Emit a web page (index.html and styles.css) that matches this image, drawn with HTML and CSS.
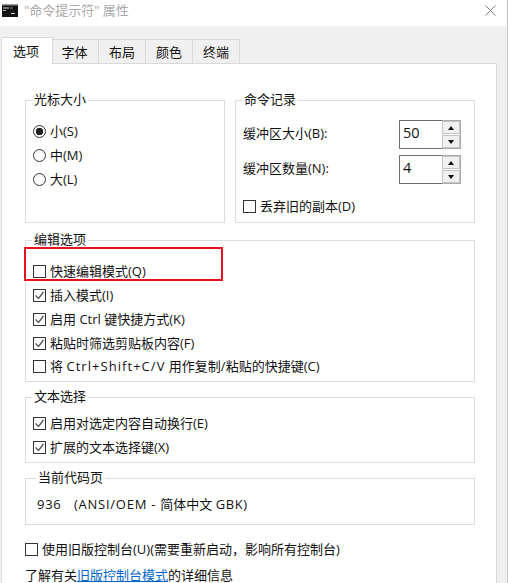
FILE: index.html
```html
<!DOCTYPE html>
<html lang="zh-CN">
<head>
<meta charset="utf-8">
<title>"命令提示符" 属性</title>
<link rel="stylesheet" href="styles.css">
</head>
<body>
<div class="window">
  <header class="titlebar">
    <svg class="app-icon" width="16" height="13" viewBox="0 0 16 13"><rect width="16" height="13" fill="#111"/><rect y="0" width="16" height="1.500" fill="#999"/><rect x="1" y="3.500" width="6" height="1" fill="#ddd"/><rect x="8" y="3.500" width="3" height="1" fill="#888"/><rect x="1" y="6" width="3" height="1" fill="#bbb"/><rect x="9" y="9" width="4" height="1" fill="#ccc"/></svg>
    <span class="title">"命令提示符" 属性</span>
    <svg class="close" width="11" height="11" viewBox="0 0 11 11"><path d="M.5.5l10 10M10.500.5l-10 10" stroke="#808080" fill="none"/></svg>
  </header>
  <nav class="tabs">
    <span class="tab active">选项</span>
    <span class="tab w46">字体</span>
    <span class="tab">布局</span>
    <span class="tab">颜色</span>
    <span class="tab">终端</span>
  </nav>
  <main class="panel">
    <div class="top-grid">
      <fieldset class="group cursor">
        <legend>光标大小</legend>
        <div class="row"><span class="radio on"></span>小(S)</div>
        <div class="row"><span class="radio"></span>中(M)</div>
        <div class="row"><span class="radio"></span>大(L)</div>
      </fieldset>
      <fieldset class="group history">
        <legend>命令记录</legend>
        <div class="spin-row">
          <span class="spin-label">缓冲区大小(B):</span>
          <div class="spin"><span class="spin-value">50</span><span class="spin-btns"><span class="btn up"></span><span class="btn down"></span></span></div>
        </div>
        <div class="spin-row second">
          <span class="spin-label">缓冲区数量(N):</span>
          <div class="spin"><span class="spin-value">4</span><span class="spin-btns"><span class="btn up"></span><span class="btn down"></span></span></div>
        </div>
        <div class="row discard"><span class="box"></span>丢弃旧的副本(D)</div>
      </fieldset>
    </div>
    <fieldset class="group edit">
      <legend>编辑选项</legend>
      <div class="highlight"></div>
      <div class="row"><span class="box"></span>快速编辑模式(Q)</div>
      <div class="row"><span class="box"><svg viewBox="0 0 11 11"><path d="M1.500 5.500l3 3 5-6.500" fill="none" stroke="#555" stroke-width="1.300"/></svg></span>插入模式(I)</div>
      <div class="row"><span class="box"><svg viewBox="0 0 11 11"><path d="M1.500 5.500l3 3 5-6.500" fill="none" stroke="#555" stroke-width="1.300"/></svg></span>启用 Ctrl 键快捷方式(K)</div>
      <div class="row"><span class="box"><svg viewBox="0 0 11 11"><path d="M1.500 5.500l3 3 5-6.500" fill="none" stroke="#555" stroke-width="1.300"/></svg></span>粘贴时筛选剪贴板内容(F)</div>
      <div class="row"><span class="box"></span><span>将 <span class="wider">Ctrl+Shift+C/V</span> 用作复制/粘贴的快捷键(C)</span></div>
    </fieldset>
    <fieldset class="group select">
      <legend>文本选择</legend>
      <div class="row"><span class="box"><svg viewBox="0 0 11 11"><path d="M1.500 5.500l3 3 5-6.500" fill="none" stroke="#555" stroke-width="1.300"/></svg></span>启用对选定内容自动换行(E)</div>
      <div class="row"><span class="box"><svg viewBox="0 0 11 11"><path d="M1.500 5.500l3 3 5-6.500" fill="none" stroke="#555" stroke-width="1.300"/></svg></span>扩展的文本选择键(X)</div>
    </fieldset>
    <fieldset class="group codepage">
      <legend>当前代码页</legend>
      <div class="cp-text"><span class="cp-latin">936&nbsp;&nbsp; (ANSI/OEM - </span>简体中文 <span class="wide">GBK)</span></div>
    </fieldset>
    <div class="row legacy"><span class="box"></span>使用旧版控制台(U)(需要重新启动，影响所有控制台)</div>
    <div class="learn">了解有关<a href="#">旧版控制台模式</a>的详细信息</div>
  </main>
</div>
</body>
</html>
```

FILE: styles.css
```css
* { box-sizing: border-box; }
html, body { margin: 0; padding: 0; }
body {
  width: 508px;
  height: 583px;
  overflow: hidden;
  font-family: "Open Sans", "Noto Sans CJK SC", sans-serif;
  font-size: 13px;
  color: #111;
  background: #f0f0f0;
}
.window {
  height: 583px;
  overflow: hidden;
  border-right: 1px solid #c4c4c4;
}
.titlebar {
  height: 26px;
  background: #fff;
  display: flex;
  align-items: center;
  padding: 0 11px 0 2px;
}
.app-icon { flex: none; margin-top: -6px; }
.title { margin-left: 6px; color: #aaa; flex: 1; margin-top: -7px; line-height: 20px; }
.close { flex: none; margin-top: -6px; }
.tabs {
  display: flex;
  align-items: flex-end;
  height: 37px;
  padding-left: 1px;
}
.tab {
  width: 48px;
  height: 24px;
  margin-right: -1px;
  border: 1px solid #d9d9d9;
  border-bottom: 0;
  background: #f0f0f0;
  display: flex;
  align-items: center;
  justify-content: center;
  position: relative;
}
.tab.active {
  width: 52px;
  height: 27px;
  background: #fff;
  z-index: 1;
  margin-bottom: -1px;
  padding: 0 2px 2px 0;
}
.tab.w46 { width: 47px; padding-right: 2px; }
.panel {
  width: 496px;
  height: 521px;
  margin-left: 1px;
  background: #fff;
  border: 1px solid #d9d9d9;
  border-bottom: 0;
  padding: 28px 0 0 23px;
}
.top-grid {
  display: grid;
  grid-template-columns: 200px 240px;
  column-gap: 10px;
  margin-bottom: 9px;
}
.group {
  margin: 0;
  min-width: 0;
  border: 1px solid #dcdcdc;
  padding: 0 7px;
  width: 450px;
}
.top-grid .group { width: auto; }
.group legend {
  margin-left: -1px;
  padding: 0 2px;
  height: 17px;
  line-height: 15px;
}
.row {
  display: flex;
  align-items: center;
  height: 24px;
  padding-bottom: 2px;
  white-space: nowrap;
}
.box {
  flex: none;
  width: 13px;
  height: 13px;
  border: 1px solid #333;
  background: #fff;
  margin: 2px 4px 0 0;
  display: block;
}
.box svg { display: block; width: 11px; height: 11px; }
.radio {
  flex: none;
  width: 13px;
  height: 13px;
  border: 1px solid #333;
  border-radius: 50%;
  margin: 2px 4px 0 0;
  background: #fff;
}
.radio.on { background: radial-gradient(circle, #222 0 3.500px, #fff 4px); }
.wide { letter-spacing: 0.6px; }
.wider { letter-spacing: 1.050px; }
.cp-latin { letter-spacing: 0.750px; }
.cursor { padding-top: 10px; }
.history { padding: 11px 13px 3px 7px; }
.spin-row {
  display: flex;
  justify-content: space-between;
  align-items: center;
  height: 29px;
}
.spin-label { margin-bottom: 4px; }
.spin-row.second { margin-top: 6px; }
.spin {
  width: 62px;
  height: 29px;
  display: flex;
}
.spin-value {
  flex: 1;
  border: 1px solid #707070;
  border-right: 0;
  font-size: 14.500px;
  line-height: 23px;
  padding-left: 3px;
  background: #fff;
}
.spin-btns {
  width: 19px;
  border: 1px solid #aaa;
  border-left: 0;
  display: flex;
  flex-direction: column;
  gap: 1px;
  background: #fff;
}
.btn {
  flex: 1;
  background: #f0f0f0;
  border: 1px solid #c4c4c4;
  display: flex;
  align-items: center;
  justify-content: center;
}
.btn::after {
  content: "";
  border-left: 3.500px solid transparent;
  border-right: 3.500px solid transparent;
}
.btn.up::after { border-bottom: 4px solid #111; }
.btn.down::after { border-top: 4px solid #111; }
.discard { margin-top: 10px; margin-bottom: 1px; }
.highlight {
  position: absolute;
  left: -2px;
  top: -2px;
  width: 199px;
  height: 34px;
  border: 2px solid #e81123;
}
.edit { position: relative; padding-top: 11px; padding-bottom: 2px; }
.edit .row { height: 23.750px; }
.select { margin-top: 7px; padding-top: 6px; padding-bottom: 3px; }
.select .row { height: 23.500px; }
.codepage { margin-top: 7px; padding: 6px 11px 7px; }
.cp-text { height: 24px; line-height: 24px; margin-top: -1px; margin-bottom: 1px; white-space: pre; }
.legacy { margin-top: 13px; }
.learn { margin-top: 5px; height: 16px; line-height: 16px; white-space: nowrap; }
.learn a { color: #0066cc; text-decoration: underline; }
```
